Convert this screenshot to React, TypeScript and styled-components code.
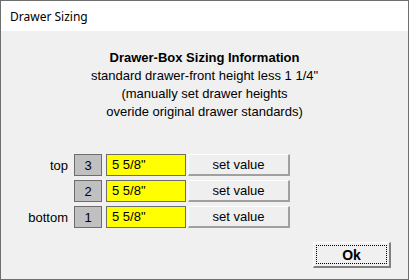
import styled, { createGlobalStyle } from "styled-components";

const GlobalStyle = createGlobalStyle`
  html, body {
    margin: 0;
    padding: 0;
    background: #ffffff;
  }
`;

const Window = styled.div`
  box-sizing: border-box;
  width: 409px;
  height: 280px;
  border: 1px solid #6e6e6e;
  display: flex;
  flex-direction: column;
  background-color: #f0f0f0;
  font-family: "Liberation Sans", Arial, sans-serif;
  color: #000;
`;

const TitleBar = styled.div`
  height: 30px;
  background-color: #ffffff;
  display: flex;
  align-items: center;
  padding-left: 9px;
  font-family: "Noto Sans", "Open Sans", sans-serif;
  font-size: 12px;
  color: #000;
`;

const Body = styled.div`
  flex: 1;
  display: flex;
  flex-direction: column;
  padding-top: 18px;
`;

const Info = styled.div`
  text-align: center;
  font-size: 13px;
  line-height: 18px;
`;

const InfoLine = styled.div<{ $bold?: boolean }>`
  font-weight: ${(p) => (p.$bold ? "bold" : "normal")};
`;

const Rows = styled.div`
  display: flex;
  flex-direction: column;
  gap: 4px;
  margin-top: 33px;
`;

const Row = styled.div`
  display: flex;
  align-items: center;
  height: 22px;
`;

const RowLabel = styled.div`
  width: 67px;
  text-align: right;
  font-size: 13px;
  margin-right: 6px;
`;

const NumBox = styled.div`
  box-sizing: border-box;
  width: 28px;
  height: 22px;
  border: 1px solid #6d6d6d;
  background-color: #c0c0c0;
  display: flex;
  align-items: center;
  justify-content: center;
  font-size: 13px;
  margin-right: 4px;
`;

const ValueField = styled.div`
  box-sizing: border-box;
  width: 80px;
  height: 22px;
  border: 1px solid #6d6d6d;
  background-color: #ffff00;
  font-size: 13px;
  padding: 2px 0 0 5px;
  margin-right: 2px;
`;

const SetButton = styled.button`
  box-sizing: border-box;
  width: 102px;
  height: 22px;
  margin: 0;
  padding: 0;
  background-color: #efefef;
  border-style: solid;
  border-width: 1px 2px 2px 1px;
  border-color: #ffffff #a0a0a0 #a0a0a0 #ffffff;
  font-family: "Liberation Sans", Arial, sans-serif;
  font-size: 13px;
  color: #000;
`;

const Footer = styled.div`
  display: flex;
  justify-content: flex-end;
  margin-top: 14px;
  padding-right: 17px;
`;

const OkButton = styled.button`
  box-sizing: border-box;
  width: 78px;
  height: 26px;
  margin: 0;
  padding: 2px;
  background-color: #f0f0f0;
  border-style: solid;
  border-width: 1px 2px 2px 1px;
  border-color: #ffffff #808080 #808080 #ffffff;
  font-family: "Liberation Sans", Arial, sans-serif;
  font-size: 14px;
  font-weight: bold;
  color: #000;
`;

const FocusRing = styled.div`
  box-sizing: border-box;
  height: 100%;
  border: 1px dotted #000;
  display: flex;
  align-items: center;
  justify-content: center;
`;

const drawers = [
  { label: "top", num: 3, value: '5 5/8"' },
  { label: "", num: 2, value: '5 5/8"' },
  { label: "bottom", num: 1, value: '5 5/8"' },
];

const App = () => {
  return (
    <>
      <GlobalStyle />
      <Window>
        <TitleBar>Drawer Sizing</TitleBar>
        <Body>
          <Info>
            <InfoLine $bold>Drawer-Box Sizing Information</InfoLine>
            <InfoLine>standard drawer-front height less 1 1/4"</InfoLine>
            <InfoLine>(manually set drawer heights</InfoLine>
            <InfoLine>overide original drawer standards)</InfoLine>
          </Info>
          <Rows>
            {drawers.map((d) => (
              <Row key={d.num}>
                <RowLabel>{d.label}</RowLabel>
                <NumBox>{d.num}</NumBox>
                <ValueField>{d.value}</ValueField>
                <SetButton>set value</SetButton>
              </Row>
            ))}
          </Rows>
          <Footer>
            <OkButton>
              <FocusRing>Ok</FocusRing>
            </OkButton>
          </Footer>
        </Body>
      </Window>
    </>
  );
};

export default App;
